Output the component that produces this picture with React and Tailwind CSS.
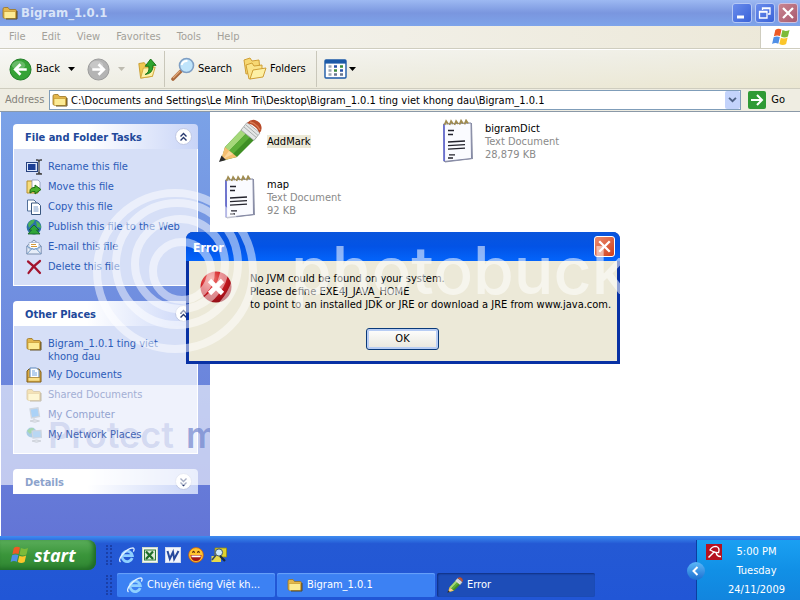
import React from 'react';

/* ---------- Icons ---------- */

const FolderIcon = ({ className }) => (
    <svg viewBox="0 0 16 16" className={className}>
        <path d="M1 4 Q1 2.5 2.5 2.5 H6 L7.5 4.5 H13 Q14.5 4.5 14.5 6 V13 H2 Q1 13 1 12 Z" fill="#e3b64c" stroke="#9a7420" strokeWidth=".8" />
        <path d="M2 6.5 H13.5 V13.5 H3.5 Q2 13.5 2 12.5 Z" fill="#fdeb94" stroke="#c49a30" strokeWidth=".7" />
        <path d="M15 6 V14 H4" fill="none" stroke="#5a430f" strokeWidth=".9" />
    </svg>
);

const ArrowBall = ({ className, fill, edge, flip }) => (
    <svg viewBox="0 0 24 24" className={className}>
        <circle cx="12" cy="12" r="11" fill={fill} stroke={edge} />
        <ellipse cx="10" cy="7.5" rx="7" ry="4.5" fill="#fff" opacity=".25" />
        <path d={flip ? 'M5.5 12 H17.5 M12 6.5 L17.5 12 L12 17.5' : 'M18.5 12 H6.5 M12 6.5 L6.5 12 L12 17.5'} fill="none" stroke="#fff" strokeWidth="2.8" />
    </svg>
);

const UpFolderIcon = () => (
    <svg viewBox="0 0 22 24" className="w-5 h-6">
        <path d="M2 6 L8 5 L10 8 L18 7 L17 20 L4 22 Z" fill="#f0c850" stroke="#c89b2a" />
        <path d="M4 22 L7 11 L20 10 L17 20 Z" fill="#fdf0a4" stroke="#d0a63a" />
        <path d="M9 18 Q14 16 13 9 H9 L15 1 L21 8 H17.5 Q18 17 9 18 Z" fill="#2fa52f" stroke="#146e14" />
    </svg>
);

const SearchIcon = () => (
    <svg viewBox="0 0 24 24" className="w-6 h-6">
        <path d="M2 22 L10 14" stroke="#a9683c" strokeWidth="3.6" strokeLinecap="round" />
        <path d="M2 21 L9 14" stroke="#e0a87a" strokeWidth="1.2" />
        <circle cx="15.5" cy="8.5" r="7" fill="#bfe4fb" stroke="#7f9fc4" strokeWidth="1.6" />
        <path d="M10.5 8 Q12 3.5 16.5 4" stroke="#fff" strokeWidth="2" fill="none" />
    </svg>
);

const FoldersIcon = () => (
    <svg viewBox="0 0 24 24" className="w-6 h-6">
        <path d="M1 3 L7 1 L9 4 L16 3 L17 14 L3 17 Z" fill="#f7d873" stroke="#cf9f35" />
        <path d="M3 8 L9 6 L11 9 L19 8 V19 L6 22 Z" fill="#fbe48a" stroke="#cf9f35" />
        <path d="M7 22 L10 13 L23 11 L20 20 Z" fill="#fdf0a4" stroke="#cf9f35" />
    </svg>
);

const ViewsIcon = () => (
    <svg viewBox="0 0 23 20" className="w-[23px] h-5">
        <rect x="1" y="1" width="21" height="18" rx="1" fill="#fff" stroke="#1c5aa8" strokeWidth="1.4" />
        <rect x="1" y="1" width="21" height="3.6" fill="#1c5aa8" />
        <path d="M4.5 7.5 h3 M4.5 11.5 h3 M4.5 15.5 h3" stroke="#9aa6b2" strokeWidth="2.4" />
        <path d="M10 7.5 h3 M16 11.5 h3" stroke="#2853a8" strokeWidth="2.4" />
        <path d="M10 11.5 h3 M16 7.5 h3" stroke="#3c8a3c" strokeWidth="2.4" />
        <path d="M10 15.5 h3 M16 15.5 h3" stroke="#6b7890" strokeWidth="2.4" />
    </svg>
);

const WindowsFlag = ({ className }) => (
    <svg viewBox="0 0 20 19" className={className}>
        <path d="M4 2 Q7 0 10.5 1.6 L9 8.5 Q6 7 2.5 8.7 Z" fill="#ee5a24" />
        <path d="M11.5 2.2 Q15 4 19 2 L17.3 9 Q14 10.8 10 9 Z" fill="#7cbb3a" />
        <path d="M2.2 9.8 Q5.5 8 8.8 9.6 L7.2 16.5 Q4 15 .6 16.8 Z" fill="#4f8fe6" />
        <path d="M9.8 10.2 Q13 12 17 10 L15.4 17 Q12 19 8.2 17 Z" fill="#fbc62b" />
    </svg>
);

const Caret = ({ className }) => (
    <svg viewBox="0 0 7 4" className={className}>
        <path d="M0 0 H7 L3.5 4 Z" fill="currentColor" />
    </svg>
);

const RenameIcon = () => (
    <svg viewBox="0 0 16 16" className="w-4 h-4">
        <rect x=".5" y="3.5" width="11" height="9" fill="#dce6fa" stroke="#27427e" />
        <rect x="2" y="5" width="7.5" height="6" fill="#1c3f95" />
        <path d="M10 1 H11.5 Q13 1 13 2.5 V13.5 Q13 15 11.5 15 H10 M16 1 H14.5 Q13 1 13 2.5 M13 13.5 Q13 15 16 15" fill="none" stroke="#444" strokeWidth="1.6" />
        <path d="M13 3 V13" stroke="#c8ccd8" strokeWidth=".6" />
    </svg>
);

const MoveIcon = () => (
    <svg viewBox="0 0 16 16" className="w-4 h-4">
        <path d="M1 2 H6 L7 4 H12 V14 H1 Z" fill="#f6dc7c" stroke="#b68f2e" />
        <path d="M6 1 H12 L14 3 V9 H6 Z" fill="#fff" stroke="#8896b8" strokeWidth=".8" />
        <path d="M4 12 Q4 8.5 9 8.5 V6 L15 10.5 L9 15 V12.5 Q6 12 4 14 Z" fill="#4cb12d" stroke="#1d6b12" />
    </svg>
);

const CopyIcon = () => (
    <svg viewBox="0 0 16 16" className="w-4 h-4">
        <path d="M1.5 1 H8 L10 3 V12 H1.5 Z" fill="#fff" stroke="#52709a" />
        <path d="M5.5 4 H12 L14.5 6.5 V15.5 H5.5 Z" fill="#fff" stroke="#38567e" />
        <path d="M7.5 8 H12 M7.5 10 H12.5 M7.5 12 H12.5" stroke="#7c9cc8" />
    </svg>
);

const PublishIcon = () => (
    <svg viewBox="0 0 16 16" className="w-4 h-4">
        <circle cx="8" cy="8" r="7.4" fill="#2b6fa8" />
        <path d="M2 5 Q5 0 9 1 Q8 4 5 6 L3 9 Z M10 2 Q15 4 15 9 L11 8 Z" fill="#4bb356" />
        <path d="M8 6 L13 11 H10.5 L14 15 H2 L5.5 11 H3 Z" fill="#2fa53a" stroke="#125f22" strokeWidth=".8" />
    </svg>
);

const MailIcon = () => (
    <svg viewBox="0 0 16 16" className="w-4 h-4">
        <path d="M.8 7 L8 1 L15.2 7 V15 H.8 Z" fill="#e6edf8" stroke="#7d8fae" />
        <path d="M3 3.5 H13 V10 H3 Z" fill="#fff" stroke="#9fb0cc" strokeWidth=".8" />
        <path d="M5 5.5 H10 M5 7.5 H11" stroke="#d59a3a" />
        <path d="M1 14.8 L6 9.5 Q8 11.5 10 9.5 L15 14.8 M1 7.4 L6 10 M15 7.4 L10 10" fill="none" stroke="#6f9ac8" />
    </svg>
);

const DeleteIcon = () => (
    <svg viewBox="0 0 16 16" className="w-4 h-4">
        <path d="M2 2.5 Q8 7 14 14 M14 2 Q7 7 2.5 14" fill="none" stroke="#a3142e" strokeWidth="2.2" strokeLinecap="round" />
    </svg>
);

const DocumentsIcon = () => (
    <svg viewBox="0 0 16 16" className="w-4 h-4">
        <path d="M1 4 L3 2 H13 L15 5 V15 H1 Z" fill="#dba941" stroke="#7c5a15" />
        <path d="M4 1 H10.5 L13 3.5 V11 H4 Z" fill="#fff" stroke="#5b86bd" />
        <path d="M6 4 H9 M6 6 H11 M6 8 H11" stroke="#6fa1dd" />
        <path d="M2 10.5 H14 V14.3 H2 Z" fill="#fbe08a" stroke="#a87d22" strokeWidth=".7" />
    </svg>
);

const ComputerIcon = () => (
    <svg viewBox="0 0 16 16" className="w-4 h-4">
        <path d="M4 2 L12 .8 L13.5 9.5 L5.5 11 Z" fill="#2f8fea" stroke="#8898b0" strokeWidth="1.3" />
        <path d="M8 11 V13 M4 14 Q9 11.6 13.5 14 Q9 16.5 4 14" fill="#b8c0d0" stroke="#8590a4" />
    </svg>
);

const NetworkIcon = () => (
    <svg viewBox="0 0 16 16" className="w-4 h-4">
        <circle cx="5.5" cy="5.5" r="5" fill="#2b82bf" />
        <path d="M1 4 Q4 0 8 1.5 Q7 5 4 7 Z" fill="#239e36" />
        <path d="M6 4 L15 3.5 L15.4 10.5 L7 11.2 Z" fill="#4f9be0" stroke="#8898b0" strokeWidth="1.2" />
        <path d="M6 14 Q10.5 11.8 15 14 Q10.5 16.5 6 14" fill="#b8c0d0" stroke="#8590a4" />
    </svg>
);

const PencilIcon = ({ className }) => (
    <svg viewBox="0 0 44 44" className={className}>
        <path d="M7 28 L27 7 L39 18 L19 38 L3 42 Z" fill="#3f8f24" />
        <path d="M7 28 L27 7 L31.5 11 L11 32 Z" fill="#a5d87a" />
        <path d="M11 32 L31.5 11 L35.5 14.5 L15 35 Z" fill="#5cae38" />
        <path d="M7 28 L19 38 L2.5 42 Z" fill="#f6bf70" />
        <path d="M11 32 L15 35 L5 40 Z" fill="#fbd79c" />
        <path d="M3.5 36.5 L8 41 L1 43 Z" fill="#2c2c2c" />
        <path d="M23 11 L29 3.5 L42 14 L36 21.5 Z" fill="#e4e6e6" stroke="#9a9f9f" strokeWidth=".8" />
        <path d="M26 8 L38.5 18.6 M28 6 L40 16.4" stroke="#a9aeae" />
        <path d="M29 4 Q33 0 37 1 Q43 3 43.5 8 Q44 12 41.5 14 Q38 6 29 4 Z" fill="#b84a28" />
        <path d="M32 3 Q38 4 42 11" stroke="#d97c54" fill="none" strokeWidth="1.3" />
    </svg>
);

const NotepadIcon = () => (
    <svg viewBox="0 0 32 44" className="w-8 h-11">
        <path d="M2 5 L30 4 L31 40 L3 43.5 Z" fill="#8f94a8" />
        <path d="M1.5 5 L29 4 L29.5 39.5 L2 42.5 Z" fill="#fafbff" stroke="#8488a4" />
        <path d="M2 5.5 L2.2 42" stroke="#6a70d0" strokeWidth="1.8" />
        <path d="M2.5 6 l1.6 -4 l2 3 M7.5 6 l1.6 -4 l2 3 M12.5 6 l1.6 -4 l2 3 M17.5 5.6 l1.6 -4 l2 3 M22.5 5.4 l1.6 -4 l2 3" stroke="#a08c50" strokeWidth="1.7" fill="none" />
        <path d="M6 11.5 h6 M6 15.5 h5 M6 23 l17 -1 M6 26.6 l17 -1 M6 30.2 l17 -1 M7 35.8 h6 M6 39 h5" stroke="#23232d" strokeWidth="1.3" />
    </svg>
);

const ErrorIcon = () => (
    <svg viewBox="0 0 32 32" className="w-8 h-8 shrink-0">
        <defs>
            <radialGradient id="err" cx=".35" cy=".25" r=".9">
                <stop offset="0" stopColor="#f07a72" />
                <stop offset=".45" stopColor="#cf1c24" />
                <stop offset="1" stopColor="#7c0810" />
            </radialGradient>
        </defs>
        <circle cx="16" cy="16" r="15.5" fill="url(#err)" />
        <path d="M9.5 9.5 L22.5 22.5 M22.5 9.5 L9.5 22.5" stroke="#fff" strokeWidth="4.6" />
    </svg>
);

const IEIcon = () => (
    <svg viewBox="0 0 16 16" className="w-4 h-4 shrink-0">
        <path d="M13.2 11 A5.2 5.2 0 1 1 13.4 8.6 H4.5" fill="none" stroke="#8fd0ff" strokeWidth="2.7" />
        <path d="M1.5 15 Q-1 13 3.5 7.5 Q9 1 14 .9 Q16 1.5 14.4 4.6" fill="none" stroke="#e3f2ff" strokeWidth="1.2" />
    </svg>
);

const ExcelIcon = () => (
    <svg viewBox="0 0 16 16" className="w-4 h-4">
        <rect x=".5" y=".5" width="15" height="15" fill="#f4f8f0" stroke="#cfdccb" />
        <rect x="2.5" y="3" width="11" height="10" fill="#dcebd8" stroke="#2d7a35" />
        <path d="M4 4.5 L11 12 M11 4.5 L4 12" stroke="#1d6d28" strokeWidth="2.2" />
    </svg>
);

const WordIcon = () => (
    <svg viewBox="0 0 16 16" className="w-4 h-4">
        <rect x=".5" y=".5" width="15" height="15" fill="#f2f5fc" stroke="#cdd8ee" />
        <path d="M2.5 4 L4.8 12 L8 5 L9.2 12 L13.5 4" fill="none" stroke="#27499c" strokeWidth="2" />
    </svg>
);

const SmileyIcon = () => (
    <svg viewBox="0 0 16 16" className="w-4 h-4">
        <circle cx="8" cy="8" r="7.4" fill="#ffc42e" stroke="#c65a10" strokeWidth=".8" />
        <path d="M2.5 8 H13.5 Q13 14 8 14 Q3 14 2.5 8 Z" fill="#a31515" />
        <path d="M3.4 8.6 H12.6 V10.2 H3.6 Z" fill="#fff" />
        <path d="M4.5 5.8 Q5.5 3 6.6 5.8 M9.4 5.8 Q10.5 3 11.5 5.8" stroke="#5a2a08" strokeWidth="1.2" fill="none" />
    </svg>
);

const FindIcon = () => (
    <svg viewBox="0 0 16 16" className="w-4 h-4">
        <path d="M4 1 H15.5 V10 H4 Z" fill="#e0d22c" stroke="#968b12" strokeWidth=".8" />
        <path d="M.5 9 H10 V15 H.5 Z" fill="#e8da4a" />
        <circle cx="8" cy="5.5" r="3.6" fill="#cfe9f8" stroke="#456" />
        <path d="M5 8 L1 13" stroke="#3a4c5c" strokeWidth="1.6" />
        <path d="M9 9 L14 14" stroke="#1c2c3c" strokeWidth="2.2" />
    </svg>
);

const AviraIcon = () => (
    <svg viewBox="0 0 16 16" className="w-4 h-4">
        <rect width="16" height="16" fill="#b5121f" />
        <path d="M4 6 Q6 2.4 10 2.4 Q14.2 3.4 12.6 8.6 Q8.5 8.8 4 6 Z" fill="none" stroke="#fff" strokeWidth="1.4" />
        <path d="M8.5 7.5 L2.5 13.5 M10 8.4 Q11 13 15 12.5" stroke="#fff" strokeWidth="1.5" fill="none" />
    </svg>
);

/* ---------- Explorer window ---------- */

const TitleBar = () => (
    <header className="h-[26px] shrink-0 flex items-center gap-[3px] px-[2px] bg-linear-to-b from-[#9db9f2] via-[#7a96df] to-[#7ea4ea]">
        <FolderIcon className="w-4 h-4" />
        <h1 className="flex-1 text-[13px] font-bold text-[#d8e4f8]">Bigram_1.0.1</h1>
        <div className="flex gap-[3px]">
            <button aria-label="Minimize" className="w-5 h-5 rounded-[3px] border border-[#b5c8f5] bg-linear-to-br from-[#6a8cec] to-[#3a62d8]">
                <svg viewBox="0 0 18 18" className="w-full h-full"><path d="M4 13 H11" stroke="#fff" strokeWidth="3" /></svg>
            </button>
            <button aria-label="Restore" className="w-5 h-5 rounded-[3px] border border-[#b5c8f5] bg-linear-to-br from-[#6a8cec] to-[#3a62d8]">
                <svg viewBox="0 0 18 18" className="w-full h-full">
                    <path d="M6.5 6 V4 H14 V10 H12 M6 4.5 H14.5" fill="none" stroke="#fff" strokeWidth="1.3" />
                    <path d="M3.5 7.5 H11 V14 H3.5 Z M3 8 H11.5" fill="none" stroke="#fff" strokeWidth="1.3" />
                </svg>
            </button>
            <button aria-label="Close" className="w-5 h-5 rounded-[3px] border border-[#d0c0dc] bg-linear-to-br from-[#c98590] to-[#a85a70]">
                <svg viewBox="0 0 18 18" className="w-full h-full"><path d="M4 4 L14 14 M14 4 L4 14" stroke="#fff" strokeWidth="2.2" /></svg>
            </button>
        </div>
    </header>
);

const menus = ['File', 'Edit', 'View', 'Favorites', 'Tools', 'Help'];

const MenuBar = () => (
    <nav className="h-[23px] shrink-0 flex border-b border-[#cfcdbf] bg-linear-to-r from-[#f6f6f4] to-[#ece8d8]">
        <div className="flex-1 flex items-center px-[1px] text-[#a3a19a]">
            {menus.map((menu) => (
                <button key={menu} className="px-2">{menu}</button>
            ))}
        </div>
        <div className="w-10 flex items-center justify-center bg-white border-l border-[#cfcdbf]">
            <WindowsFlag className="w-5 h-[18px]" />
        </div>
    </nav>
);

const Toolbar = () => (
    <div className="h-10 shrink-0 flex items-center pl-[9px] border-t border-b border-t-white border-b-[#cfcdbf] bg-linear-to-br from-[#f7f7f5] via-[#efeee4] to-[#ebe7d2]">
        <button className="flex items-center gap-1">
            <ArrowBall className="w-[23px] h-[23px]" fill="#36a336" edge="#1f7a26" />
            Back
        </button>
        <button aria-label="Back history" className="ml-2"><Caret className="w-[7px] h-1" /></button>
        <button aria-label="Forward" className="ml-3"><ArrowBall className="w-[23px] h-[23px]" fill="#b4b4b4" edge="#999999" flip /></button>
        <button aria-label="Forward history" className="ml-2 text-[#bdbbb0]"><Caret className="w-[7px] h-1" /></button>
        <button aria-label="Up" className="ml-3"><UpFolderIcon /></button>
        <div className="w-px h-9 ml-[7px] bg-[#c9c7ba]" />
        <button className="flex items-center gap-[3px] ml-[6px]"><SearchIcon />Search</button>
        <button className="flex items-center gap-[3px] ml-[11px]"><FoldersIcon />Folders</button>
        <div className="w-px h-9 ml-[10px] bg-[#c9c7ba]" />
        <button aria-label="Views" className="flex items-center gap-[2px] ml-[7px]">
            <ViewsIcon />
            <Caret className="w-[7px] h-1" />
        </button>
    </div>
);

const AddressBar = () => (
    <div className="h-[23px] shrink-0 flex items-center pl-[5px] pr-[15px] border-b border-[#8b99a8] bg-[#efede2]">
        <label htmlFor="address" className="w-[44px] text-[#85837b]">Address</label>
        <div className="flex-1 h-5 flex items-center gap-[3px] pl-[2px] bg-white border border-[#7f9db9]">
            <FolderIcon className="w-4 h-4" />
            <input
                id="address"
                type="text"
                defaultValue="C:\Documents and Settings\Le Minh Tri\Desktop\Bigram_1.0.1 ting viet khong dau\Bigram_1.0.1"
                className="flex-1 min-w-0 pt-[2px] bg-transparent text-black outline-none"
            />
            <button aria-label="Show addresses" className="w-[15px] h-[18px] flex items-center justify-center rounded-[2px] bg-[#c3d3fb]">
                <svg viewBox="0 0 10 7" className="w-[9px] h-[6px]"><path d="M1 1 L5 5 L9 1" fill="none" stroke="#4d6185" strokeWidth="2.2" /></svg>
            </button>
        </div>
        <button className="flex items-center gap-[5px] ml-[7px]">
            <svg viewBox="0 0 18 18" className="w-[18px] h-[18px]">
                <rect width="18" height="18" rx="2" fill="#2f9a35" />
                <path d="M3 9 H14 M9 4 L14 9 L9 14" fill="none" stroke="#fff" strokeWidth="2" />
            </svg>
            Go
        </button>
    </div>
);

/* ---------- Task pane ---------- */

const fileTasks = [
    { label: 'Rename this file', icon: <RenameIcon /> },
    { label: 'Move this file', icon: <MoveIcon /> },
    { label: 'Copy this file', icon: <CopyIcon /> },
    { label: 'Publish this file to the Web', icon: <PublishIcon /> },
    { label: 'E-mail this file', icon: <MailIcon /> },
    { label: 'Delete this file', icon: <DeleteIcon /> },
];

const places = [
    { label: 'Bigram_1.0.1 ting viet khong dau', icon: <FolderIcon className="w-4 h-4" /> },
    { label: 'My Documents', icon: <DocumentsIcon /> },
    { label: 'Shared Documents', icon: <FolderIcon className="w-4 h-4" />, tone: 'relative z-10 text-[#a3afd4]' },
    { label: 'My Computer', icon: <ComputerIcon />, tone: 'relative z-10 text-[#93a3d0]' },
    { label: 'My Network Places', icon: <NetworkIcon />, tone: 'relative z-10 text-[#4565b4]' },
];

const PaneSection = ({ title, items, open }) => (
    <section>
        <div className="h-[25px] flex items-center justify-between pl-3 pr-[6px] rounded-t-[4px] bg-linear-to-r from-white from-40% to-[#c8d4f7]">
            <h2 className={`pt-1 text-[11px] font-bold ${open ? 'text-[#21489a]' : 'relative z-10 text-[#8da3cc]'}`}>{title}</h2>
            <button aria-label={open ? 'Collapse' : 'Expand'} className="w-[17px] h-[17px] rounded-full bg-white border border-[#c0c8e4] flex items-center justify-center">
                <svg viewBox="0 0 9 10" className="w-[9px] h-[10px]">
                    <path
                        d={open ? 'M1.5 4.5 L4.5 1.5 L7.5 4.5 M1.5 8.5 L4.5 5.5 L7.5 8.5' : 'M1.5 1.5 L4.5 4.5 L7.5 1.5 M1.5 5.5 L4.5 8.5 L7.5 5.5'}
                        fill="none"
                        stroke="#26386e"
                        strokeWidth="1.4"
                    />
                </svg>
            </button>
        </div>
        {open && (
            <ul className="flex flex-col gap-[4px] pt-[10px] pb-[10px] pl-3 pr-8 bg-[#d6dff7] border border-t-0 border-white text-[#2b5bb8]">
                {items.map((item) => (
                    <li key={item.label}>
                        <a href="#" className="flex items-start gap-[6px]">
                            <span className="shrink-0">{item.icon}</span>
                            <span className={`pt-px leading-[13px] -mr-4 ${item.tone || ''}`}>{item.label}</span>
                        </a>
                    </li>
                ))}
            </ul>
        )}
    </section>
);

const TaskPane = () => (
    <aside className="relative w-[210px] shrink-0 overflow-hidden border-l border-white bg-linear-to-b from-[#7ba2e7] to-[#6375d6]">
        <div className="flex flex-col gap-[15px] px-3 pt-3">
            <PaneSection title="File and Folder Tasks" items={fileTasks} open />
            <PaneSection title="Other Places" items={places} open />
            <PaneSection title="Details" items={[]} />
        </div>
        {/* Pale banner over the lower half of the pane */}
        <div className="absolute inset-x-0 top-[273px] h-[100px] flex items-center bg-white/60 pointer-events-none">
            <p className="flex gap-3 pl-[47px] whitespace-nowrap font-['Inter',sans-serif] font-semibold text-[36px] leading-[44px] text-[#8f9fd8]/30">
                <span>Protect</span>
                <span className="text-[#6f84cc]/70">m</span>
            </p>
        </div>
    </aside>
);

/* ---------- File list ---------- */

const files = [
    { name: 'AddMark', selected: true },
    { name: 'bigramDict', type: 'Text Document', size: '28,879 KB' },
    { name: 'map', type: 'Text Document', size: '92 KB' },
];

const FileList = () => (
    <main className="flex-1 bg-white pl-2 pt-px">
        <ul className="grid grid-cols-[repeat(auto-fill,218px)] auto-rows-[56px]">
            {files.map((file) => (
                <li key={file.name} className="flex items-center gap-[5px]">
                    <div className="w-11 flex justify-center shrink-0">
                        {file.selected ? <PencilIcon className="w-11 h-11" /> : <NotepadIcon />}
                    </div>
                    <div className="leading-[13px] text-[#8a8a8a]">
                        <p className="text-black">
                            {file.selected ? <span className="bg-[#ece9d8]">{file.name}</span> : file.name}
                        </p>
                        <p>{file.type}</p>
                        <p>{file.size}</p>
                    </div>
                </li>
            ))}
        </ul>
    </main>
);

/* ---------- Error dialog ---------- */

const ErrorDialog = () => (
    <div role="alertdialog" aria-labelledby="error-title" className="absolute left-[186px] top-[120px] w-[434px] rounded-t-[7px] bg-[#0831a4] overflow-hidden px-[3px] pb-[3px]">
        <div className="-mx-[3px] h-[29px] flex items-center justify-between pl-[7px] pr-[5px] bg-linear-to-b from-[#0a55dc] via-[#0353e6] to-[#0364fb]">
            <h2 id="error-title" className="pt-[3px] text-[12px] font-bold text-white">Error</h2>
            <button aria-label="Close" className="w-[21px] h-[21px] rounded-[3px] border border-white bg-linear-to-br from-[#ea8a6c] to-[#cf3c14]">
                <svg viewBox="0 0 18 18" className="w-full h-full"><path d="M4 4 L14 14 M14 4 L4 14" stroke="#fff" strokeWidth="2.2" /></svg>
            </button>
        </div>
        <div className="bg-[#ece9d8] pl-[11px] pt-[10px] pb-[11px]">
            <div className="flex gap-[18px]">
                <ErrorIcon />
                <p className="pt-px leading-[13px] whitespace-nowrap">
                    No JVM could be found on your system.<br />
                    Please define EXE4J_JAVA_HOME<br />
                    to point to an installed JDK or JRE or download a JRE from www.java.com.
                </p>
            </div>
            <button className="block mt-[17px] ml-[166px] w-[73px] h-[22px] rounded-[3px] border border-[#0a3a7a] bg-linear-to-b from-white to-[#e8e6dc] shadow-[inset_0_0_0_2px_#b8cdf4]">
                OK
            </button>
        </div>
    </div>
);

const Watermark = () => (
    <div className="absolute left-[88px] top-[68px] pointer-events-none flex">
        <svg viewBox="88 180 200 180" className="w-[200px] h-[180px]" fill="none" stroke="#fff" strokeOpacity=".5">
            <circle cx="175" cy="271" r="78" strokeWidth="8" />
            <circle cx="177" cy="264" r="61" strokeWidth="8" />
            <circle cx="180" cy="264" r="45" strokeWidth="8" />
            <circle cx="182" cy="271" r="29" strokeWidth="8" />
        </svg>
        <span className="pt-[50px] pl-[3px] font-['Inter',sans-serif] font-medium text-[66px] leading-[80px] text-white/55">photobucket</span>
    </div>
);

/* ---------- Taskbar ---------- */

const Grip = () => <div className="w-[6px] h-5 border-x-2 border-dotted border-[#1a3fa8]" />;

const tasks = [
    { label: 'Chuyển tiếng Việt kh...', icon: <IEIcon /> },
    { label: 'Bigram_1.0.1', icon: <FolderIcon className="w-4 h-4" /> },
    { label: 'Error', icon: <PencilIcon className="w-4 h-4" />, active: true },
];

const Taskbar = () => (
    <footer className="h-16 shrink-0 flex bg-linear-to-b from-[#3f8cf0] via-[#2459d4] via-12% to-[#2156d6] text-white">
        <div className="flex-1 min-w-0 flex flex-col">
            <div className="h-9 pt-1 flex items-start">
                <button className="w-24 h-[30px] flex items-center gap-[5px] pl-[10px] rounded-r-[8px] bg-linear-to-b from-[#5aad5a] via-[#3a953a] to-[#2f8532] shadow-[inset_-3px_-2px_4px_#1f6b26] font-['Open_Sans',sans-serif] text-[18px] leading-5 font-bold italic">
                    <WindowsFlag className="w-[19px] h-[18px]" />
                    start
                </button>
                <div className="flex items-center gap-[7px] h-[30px] pl-[10px]">
                    <Grip />
                    <a href="#" aria-label="Internet Explorer"><IEIcon /></a>
                    <a href="#" aria-label="Excel"><ExcelIcon /></a>
                    <a href="#" aria-label="Word"><WordIcon /></a>
                    <a href="#" aria-label="Messenger"><SmileyIcon /></a>
                    <a href="#" aria-label="Find"><FindIcon /></a>
                </div>
            </div>
            <div className="flex items-center gap-[2px] pl-[106px] pt-px">
                <Grip />
                <div className="flex gap-[2px] pl-[3px]">
                    {tasks.map((task) => (
                        <button
                            key={task.label}
                            className={`w-[158px] h-6 flex items-center gap-1 pl-[10px] rounded-[2px] whitespace-nowrap ${task.active ? 'bg-[#1d4db8] shadow-[inset_1px_1px_2px_#0f2f80]' : 'bg-[#3c81f3] shadow-[inset_0_1px_1px_#6aa2fa]'}`}
                        >
                            {task.icon}
                            {task.label}
                        </button>
                    ))}
                </div>
            </div>
        </div>
        <div className="relative w-[104px] mt-1 flex justify-end gap-3 pr-[15px] border-l border-[#0c3fa0] bg-linear-to-b from-[#1aa0f2] via-[#1190e6] to-[#1285de]">
            <button aria-label="Show hidden icons" className="absolute -left-[10px] top-[22px] w-[18px] h-[18px] rounded-full bg-linear-to-b from-[#5cb8f8] to-[#1c6fd0]">
                <svg viewBox="0 0 18 18" className="w-full h-full"><path d="M10.5 5 L6.5 9 L10.5 13" fill="none" stroke="#fff" strokeWidth="2" /></svg>
            </button>
            <div className="absolute left-[9px] top-1"><AviraIcon /></div>
            <div className="pt-[2px] text-center leading-[19px]">
                <p>5:00 PM</p>
                <p>Tuesday</p>
                <p>24/11/2009</p>
            </div>
        </div>
    </footer>
);

const App = () => (
    <div className="min-h-screen flex flex-col bg-white text-black text-[11px] font-['DejaVu_Sans_Condensed','DejaVu_Sans',sans-serif]">
        <TitleBar />
        <MenuBar />
        <Toolbar />
        <AddressBar />
        <div className="relative flex-1 flex overflow-hidden">
            <TaskPane />
            <FileList />
            <ErrorDialog />
            <Watermark />
        </div>
        <Taskbar />
    </div>
);

export default App;
